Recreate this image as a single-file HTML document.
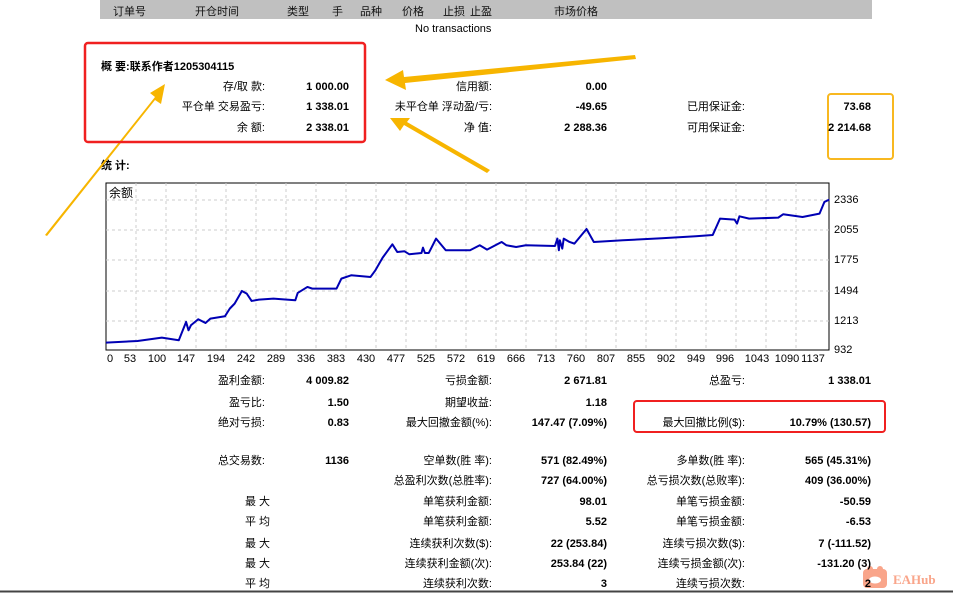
<!DOCTYPE html>
<html><head><meta charset="utf-8"><style>
*{margin:0;padding:0;box-sizing:border-box}
body{width:953px;height:593px;background:#fff;position:relative;overflow:hidden;font-family:"Liberation Sans","Noto Sans CJK SC",sans-serif;font-size:11px;color:#000}
.a{position:absolute;white-space:nowrap;line-height:13px}
.r{text-align:right}
.b{font-weight:bold}
.x{position:absolute;top:353px;transform:translateX(-50%);line-height:13px}
.hdr{position:absolute;left:100px;top:0;width:772px;height:19px;background:#c0c0c0}
.hdr span{position:absolute;top:3px;font-size:11px;color:#111}
</style></head><body>
<div class="hdr">
<span style="left:13px">订单号</span><span style="left:95px">开仓时间</span><span style="left:187px">类型</span><span style="left:232px">手</span><span style="left:260px">品种</span><span style="left:302px">价格</span><span style="left:343px">止损</span><span style="left:370px">止盈</span><span style="left:454px">市场价格</span>
</div>
<div class="a" style="left:415px;top:23px">No transactions</div>
<div class="a b" style="left:101px;top:61px">概 要:联系作者1205304115</div>
<div class="a b" style="left:101px;top:160px">统 计:</div>

<svg style="position:absolute;left:0;top:0" width="953" height="593">
<rect x="106" y="183" width="723" height="167" fill="#fff" stroke="#000" stroke-width="1"/>
<g stroke="#ccc" stroke-dasharray="3,3" stroke-width="1">
<line x1="106" y1="200" x2="829" y2="200"/><line x1="106" y1="230" x2="829" y2="230"/><line x1="106" y1="260" x2="829" y2="260"/><line x1="106" y1="291" x2="829" y2="291"/><line x1="106" y1="321" x2="829" y2="321"/>
<line x1="136" y1="183" x2="136" y2="350"/><line x1="166" y1="183" x2="166" y2="350"/><line x1="196" y1="183" x2="196" y2="350"/><line x1="226" y1="183" x2="226" y2="350"/><line x1="256" y1="183" x2="256" y2="350"/><line x1="286" y1="183" x2="286" y2="350"/><line x1="316" y1="183" x2="316" y2="350"/><line x1="346" y1="183" x2="346" y2="350"/><line x1="376" y1="183" x2="376" y2="350"/><line x1="406" y1="183" x2="406" y2="350"/><line x1="436" y1="183" x2="436" y2="350"/><line x1="466" y1="183" x2="466" y2="350"/><line x1="496" y1="183" x2="496" y2="350"/><line x1="526" y1="183" x2="526" y2="350"/><line x1="556" y1="183" x2="556" y2="350"/><line x1="586" y1="183" x2="586" y2="350"/><line x1="616" y1="183" x2="616" y2="350"/><line x1="646" y1="183" x2="646" y2="350"/><line x1="676" y1="183" x2="676" y2="350"/><line x1="706" y1="183" x2="706" y2="350"/><line x1="736" y1="183" x2="736" y2="350"/><line x1="766" y1="183" x2="766" y2="350"/><line x1="796" y1="183" x2="796" y2="350"/>
</g>
<g transform="translate(89,170.3) scale(0.4854,0.3333)">
<polyline fill="none" stroke="#0000b4" stroke-width="2" vector-effect="non-scaling-stroke" stroke-linejoin="round" points="35,517 100,512 150,502 185,510 200,455 205,480 210,465 225,447 240,458 250,445 280,438 290,415 300,400 315,362 325,370 335,392 350,388 380,385 425,390 430,368 450,350 460,355 510,355 520,325 540,315 580,320 590,300 605,262 625,222 635,245 650,243 660,252 685,248 688,232 692,248 700,248 715,205 735,240 785,240 805,225 820,238 850,215 860,225 880,230 900,225 960,227 965,205 968,240 970,210 975,235 978,205 990,215 1000,220 1025,176 1040,215 1100,210 1180,204 1250,198 1285,194 1300,145 1330,148 1335,160 1340,138 1360,145 1420,142 1430,132 1470,140 1505,130 1515,95 1525,88"/>
</g>
<g fill="#f7b500">
<polygon points="635,55 636,59 405,83 406,90 385,80 403,70 404,77"/>
<polygon points="490,170 487,173 404,125 400,131 390,118 410,118 407,122"/>
<polygon points="45,235 47,236 155,100 161,104 165,84 150,93 155,97"/>
</g>
<rect x="85" y="43" width="280" height="99" rx="3" fill="none" stroke="#f02020" stroke-width="2.5"/>
<rect x="828" y="94" width="65" height="65" rx="3" fill="none" stroke="#f8b820" stroke-width="2"/>
<rect x="634" y="401" width="251" height="31" rx="3" fill="none" stroke="#f02020" stroke-width="2"/>
<line x1="0" y1="591.5" x2="953" y2="591.5" stroke="#444" stroke-width="2"/>
<rect x="863" y="569" width="24" height="19" rx="4" fill="#f9a58a"/>
<circle cx="870" cy="569" r="3" fill="#f9a58a"/><circle cx="880" cy="569" r="3" fill="#f9a58a"/>
<ellipse cx="875" cy="580" rx="6" ry="3.5" fill="#fff"/>
<text x="893" y="584" font-family="Liberation Serif,serif" font-weight="bold" font-size="13" fill="#f9a58a">EAHub</text>
</svg>
<div class="a" style="left:109px;top:187px;font-size:12px">余额</div>
<div class="a" style="left:834px;top:194px">2336</div>
<div class="a" style="left:834px;top:224px">2055</div>
<div class="a" style="left:834px;top:254px">1775</div>
<div class="a" style="left:834px;top:285px">1494</div>
<div class="a" style="left:834px;top:315px">1213</div>
<div class="a" style="left:834px;top:344px">932</div>
<div class="x" style="left:110px">0</div><div class="x" style="left:130px">53</div><div class="x" style="left:157px">100</div><div class="x" style="left:186px">147</div><div class="x" style="left:216px">194</div><div class="x" style="left:246px">242</div><div class="x" style="left:276px">289</div><div class="x" style="left:306px">336</div><div class="x" style="left:336px">383</div><div class="x" style="left:366px">430</div><div class="x" style="left:396px">477</div><div class="x" style="left:426px">525</div><div class="x" style="left:456px">572</div><div class="x" style="left:486px">619</div><div class="x" style="left:516px">666</div><div class="x" style="left:546px">713</div><div class="x" style="left:576px">760</div><div class="x" style="left:606px">807</div><div class="x" style="left:636px">855</div><div class="x" style="left:666px">902</div><div class="x" style="left:696px">949</div><div class="x" style="left:725px">996</div><div class="x" style="left:757px">1043</div><div class="x" style="left:787px">1090</div><div class="x" style="left:813px">1137</div>

<div class="a r" style="right:688px;top:81px">存/取 款:</div><div class="a r b" style="right:604px;top:81px">1 000.00</div>
<div class="a r" style="right:688px;top:101px">平仓单 交易盈亏:</div><div class="a r b" style="right:604px;top:101px">1 338.01</div>
<div class="a r" style="right:688px;top:122px">余 额:</div><div class="a r b" style="right:604px;top:122px">2 338.01</div>
<div class="a r" style="right:461px;top:81px">信用额:</div><div class="a r b" style="right:346px;top:81px">0.00</div>
<div class="a r" style="right:461px;top:101px">未平仓单 浮动盈/亏:</div><div class="a r b" style="right:346px;top:101px">-49.65</div>
<div class="a r" style="right:461px;top:122px">净 值:</div><div class="a r b" style="right:346px;top:122px">2 288.36</div>
<div class="a r" style="right:208px;top:101px">已用保证金:</div><div class="a r b" style="right:82px;top:101px">73.68</div>
<div class="a r" style="right:208px;top:122px">可用保证金:</div><div class="a r b" style="right:82px;top:122px">2 214.68</div>

<div class="a r" style="right:688px;top:375px">盈利金额:</div><div class="a r b" style="right:604px;top:375px">4 009.82</div>
<div class="a r" style="right:461px;top:375px">亏损金额:</div><div class="a r b" style="right:346px;top:375px">2 671.81</div>
<div class="a r" style="right:208px;top:375px">总盈亏:</div><div class="a r b" style="right:82px;top:375px">1 338.01</div>
<div class="a r" style="right:688px;top:397px">盈亏比:</div><div class="a r b" style="right:604px;top:397px">1.50</div>
<div class="a r" style="right:461px;top:397px">期望收益:</div><div class="a r b" style="right:346px;top:397px">1.18</div>
<div class="a r" style="right:688px;top:417px">绝对亏损:</div><div class="a r b" style="right:604px;top:417px">0.83</div>
<div class="a r" style="right:461px;top:417px">最大回撤金额(%):</div><div class="a r b" style="right:346px;top:417px">147.47 (7.09%)</div>
<div class="a r" style="right:208px;top:417px">最大回撤比例($):</div><div class="a r b" style="right:82px;top:417px">10.79% (130.57)</div>

<div class="a r" style="right:688px;top:455px">总交易数:</div><div class="a r b" style="right:604px;top:455px">1136</div>
<div class="a r" style="right:461px;top:455px">空单数(胜 率):</div><div class="a r b" style="right:346px;top:455px">571 (82.49%)</div>
<div class="a r" style="right:208px;top:455px">多单数(胜 率):</div><div class="a r b" style="right:82px;top:455px">565 (45.31%)</div>
<div class="a r" style="right:461px;top:475px">总盈利次数(总胜率):</div><div class="a r b" style="right:346px;top:475px">727 (64.00%)</div>
<div class="a r" style="right:208px;top:475px">总亏损次数(总败率):</div><div class="a r b" style="right:82px;top:475px">409 (36.00%)</div>
<div class="a" style="left:245px;top:496px">最 大</div>
<div class="a r" style="right:461px;top:496px">单笔获利金额:</div><div class="a r b" style="right:346px;top:496px">98.01</div>
<div class="a r" style="right:208px;top:496px">单笔亏损金额:</div><div class="a r b" style="right:82px;top:496px">-50.59</div>
<div class="a" style="left:245px;top:516px">平 均</div>
<div class="a r" style="right:461px;top:516px">单笔获利金额:</div><div class="a r b" style="right:346px;top:516px">5.52</div>
<div class="a r" style="right:208px;top:516px">单笔亏损金额:</div><div class="a r b" style="right:82px;top:516px">-6.53</div>
<div class="a" style="left:245px;top:538px">最 大</div>
<div class="a r" style="right:461px;top:538px">连续获利次数($):</div><div class="a r b" style="right:346px;top:538px">22 (253.84)</div>
<div class="a r" style="right:208px;top:538px">连续亏损次数($):</div><div class="a r b" style="right:82px;top:538px">7 (-111.52)</div>
<div class="a" style="left:245px;top:558px">最 大</div>
<div class="a r" style="right:461px;top:558px">连续获利金额(次):</div><div class="a r b" style="right:346px;top:558px">253.84 (22)</div>
<div class="a r" style="right:208px;top:558px">连续亏损金额(次):</div><div class="a r b" style="right:82px;top:558px">-131.20 (3)</div>
<div class="a" style="left:245px;top:578px">平 均</div>
<div class="a r" style="right:461px;top:578px">连续获利次数:</div><div class="a r b" style="right:346px;top:578px">3</div>
<div class="a r" style="right:208px;top:578px">连续亏损次数:</div><div class="a r b" style="right:82px;top:578px">2</div>
</body></html>
